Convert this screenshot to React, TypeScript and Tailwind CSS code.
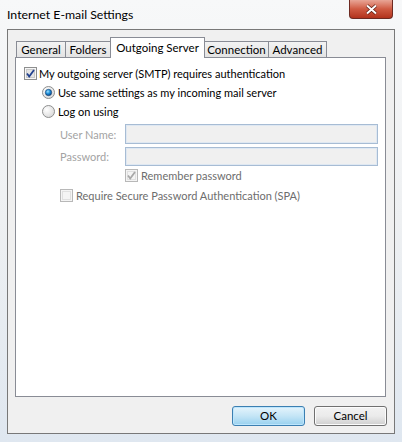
import React from 'react';

const font = { fontFamily: 'Lato, "Noto Sans", sans-serif' };

function CheckBox({ checked, disabled }: { checked?: boolean; disabled?: boolean }) {
  const mark = disabled ? '#a8a8a8' : '#21418f';
  return (
    <svg width="13" height="13" viewBox="0 0 13 13" className="shrink-0">
      <rect x="0.5" y="0.5" width="12" height="12" fill={disabled ? '#f4f4f4' : '#f6f6f6'} stroke={disabled ? '#b8b8b8' : '#8e8f8f'} />
      <rect x="2.5" y="2.5" width="8" height="8" fill={disabled ? '#f4f4f4' : '#e4e4e4'} stroke={disabled ? '#e0e0e0' : '#c8c8c8'} />
      {checked && <path d="M3 6.5 L5.2 9.5 L10 3" fill="none" stroke={mark} strokeWidth="1.8" />}
    </svg>
  );
}

function Radio({ checked }: { checked?: boolean }) {
  return (
    <svg width="13" height="13" viewBox="0 0 13 13" className="shrink-0">
      <defs>
        <radialGradient id="rbg" cx="0.35" cy="0.35" r="0.8">
          <stop offset="0" stopColor="#ffffff" />
          <stop offset="1" stopColor="#d4d4d4" />
        </radialGradient>
        <radialGradient id="dot" cx="0.4" cy="0.35" r="0.7">
          <stop offset="0" stopColor="#9fe1ff" />
          <stop offset="0.5" stopColor="#1a8cd8" />
          <stop offset="1" stopColor="#0b3f7a" />
        </radialGradient>
      </defs>
      <circle cx="6.5" cy="6.5" r="6" fill="url(#rbg)" stroke="#8e8f8f" />
      {checked && <circle cx="6.5" cy="6.5" r="3.2" fill="url(#dot)" stroke="#1d3f6e" strokeWidth="0.6" />}
    </svg>
  );
}

const tabBase =
  'mt-[4px] h-[16px] shrink-0 whitespace-nowrap border border-b-0 border-[#898c95] bg-gradient-to-b from-[#f3f3f3] to-[#e3e3e3] text-center text-[11.5px] leading-[15px] text-black';

export default function App() {
  return (
    <div className="relative h-[442px] w-[402px] overflow-hidden bg-gradient-to-b from-[#f7f8f9] via-[#eef0f2] to-[#dfe7f0]" style={font}>
      <div className="absolute right-[9px] top-0 flex h-[19px] w-[44px] items-center justify-center rounded-b-[4px] border border-t-0 border-[#6d2a22] bg-gradient-to-b from-[#e8a596] via-[#cf5a42] to-[#b2321c]">
        <svg width="13" height="11" viewBox="0 0 13 11">
          <path d="M2 1.5 L11 9.5 M11 1.5 L2 9.5" stroke="#5a1a10" strokeWidth="3.4" />
          <path d="M2 1.5 L11 9.5 M11 1.5 L2 9.5" stroke="#ffffff" strokeWidth="2" />
        </svg>
      </div>
      <div className="h-[29px] pl-[7px] pt-[6px] text-[12.3px] leading-[18px] text-black">Internet E-mail Settings</div>
      <div className="mx-[7px] flex h-[405px] flex-col border border-[#787878] bg-[#f0f0f0] px-[7px] pt-[7px]">
        <div className="flex pl-[1px]">
          <div className={tabBase + ' w-[50px]'}>General</div>
          <div className={tabBase + ' -ml-[1px] w-[46px]'}>Folders</div>
          <div className="relative z-10 -ml-[1px] mb-[-1px] h-[21px] w-[95px] shrink-0 whitespace-nowrap border border-b-0 border-[#898c95] bg-white pt-[2px] text-center text-[11.5px] leading-[15px] text-black">
            Outgoing Server
          </div>
          <div className={tabBase + ' -ml-[1px] w-[65px]'}>Connection</div>
          <div className={tabBase + ' -ml-[1px] w-[59px]'}>Advanced</div>
        </div>
        <div className="h-[340px] w-[371px] border border-[#898c95] bg-white pl-[8px] pt-[8px] text-[11px] leading-[15px] text-black">
          <div className="flex items-center gap-[2px]">
            <CheckBox checked />
            <span>My outgoing server (SMTP) requires authentication</span>
          </div>
          <div className="ml-[18px] mt-[4px] flex items-center gap-[3px]">
            <Radio checked />
            <span>Use same settings as my incoming mail server</span>
          </div>
          <div className="ml-[18px] mt-[4px] flex items-center gap-[3px]">
            <Radio />
            <span>Log on using</span>
          </div>
          <div className="ml-[36px] mt-[5px] flex flex-col text-[#a3a3a3]">
            <div className="flex items-center">
              <span className="w-[65px] whitespace-nowrap">User Name:</span>
              <div className="h-[20px] w-[253px] border border-[#a7bcd4] bg-[#f0f0f0] shadow-[inset_0_0_0_1px_#dfe8f2]" />
            </div>
            <div className="mt-[3px] flex items-center">
              <span className="w-[65px] whitespace-nowrap">Password:</span>
              <div className="h-[19px] w-[253px] border border-[#a7bcd4] bg-[#f0f0f0] shadow-[inset_0_0_0_1px_#dfe8f2]" />
            </div>
            <div className="ml-[65px] mt-[2px] flex items-center gap-[3px] text-[#6d6d6d]">
              <CheckBox checked disabled />
              <span>Remember password</span>
            </div>
            <div className="mt-[5px] flex items-center gap-[3px] text-[#6d6d6d]">
              <CheckBox disabled />
              <span>Require Secure Password Authentication (SPA)</span>
            </div>
          </div>
        </div>
        <div className="mt-[9px] flex justify-end gap-[9px] text-[11.5px]">
          <div className="flex h-[20px] w-[73px] items-center justify-center rounded-[3px] border border-[#3c7fb1] bg-gradient-to-b from-[#e5f4fc] via-[#c4e5f6] to-[#98d1ef] shadow-[inset_0_0_0_1px_#bde6fd]">OK</div>
          <div className="flex h-[20px] w-[73px] items-center justify-center rounded-[3px] border border-[#707070] bg-gradient-to-b from-[#f2f2f2] via-[#ebebeb] to-[#cfcfcf] shadow-[inset_0_0_0_1px_#fcfcfc]">Cancel</div>
        </div>
      </div>
    </div>
  );
}
